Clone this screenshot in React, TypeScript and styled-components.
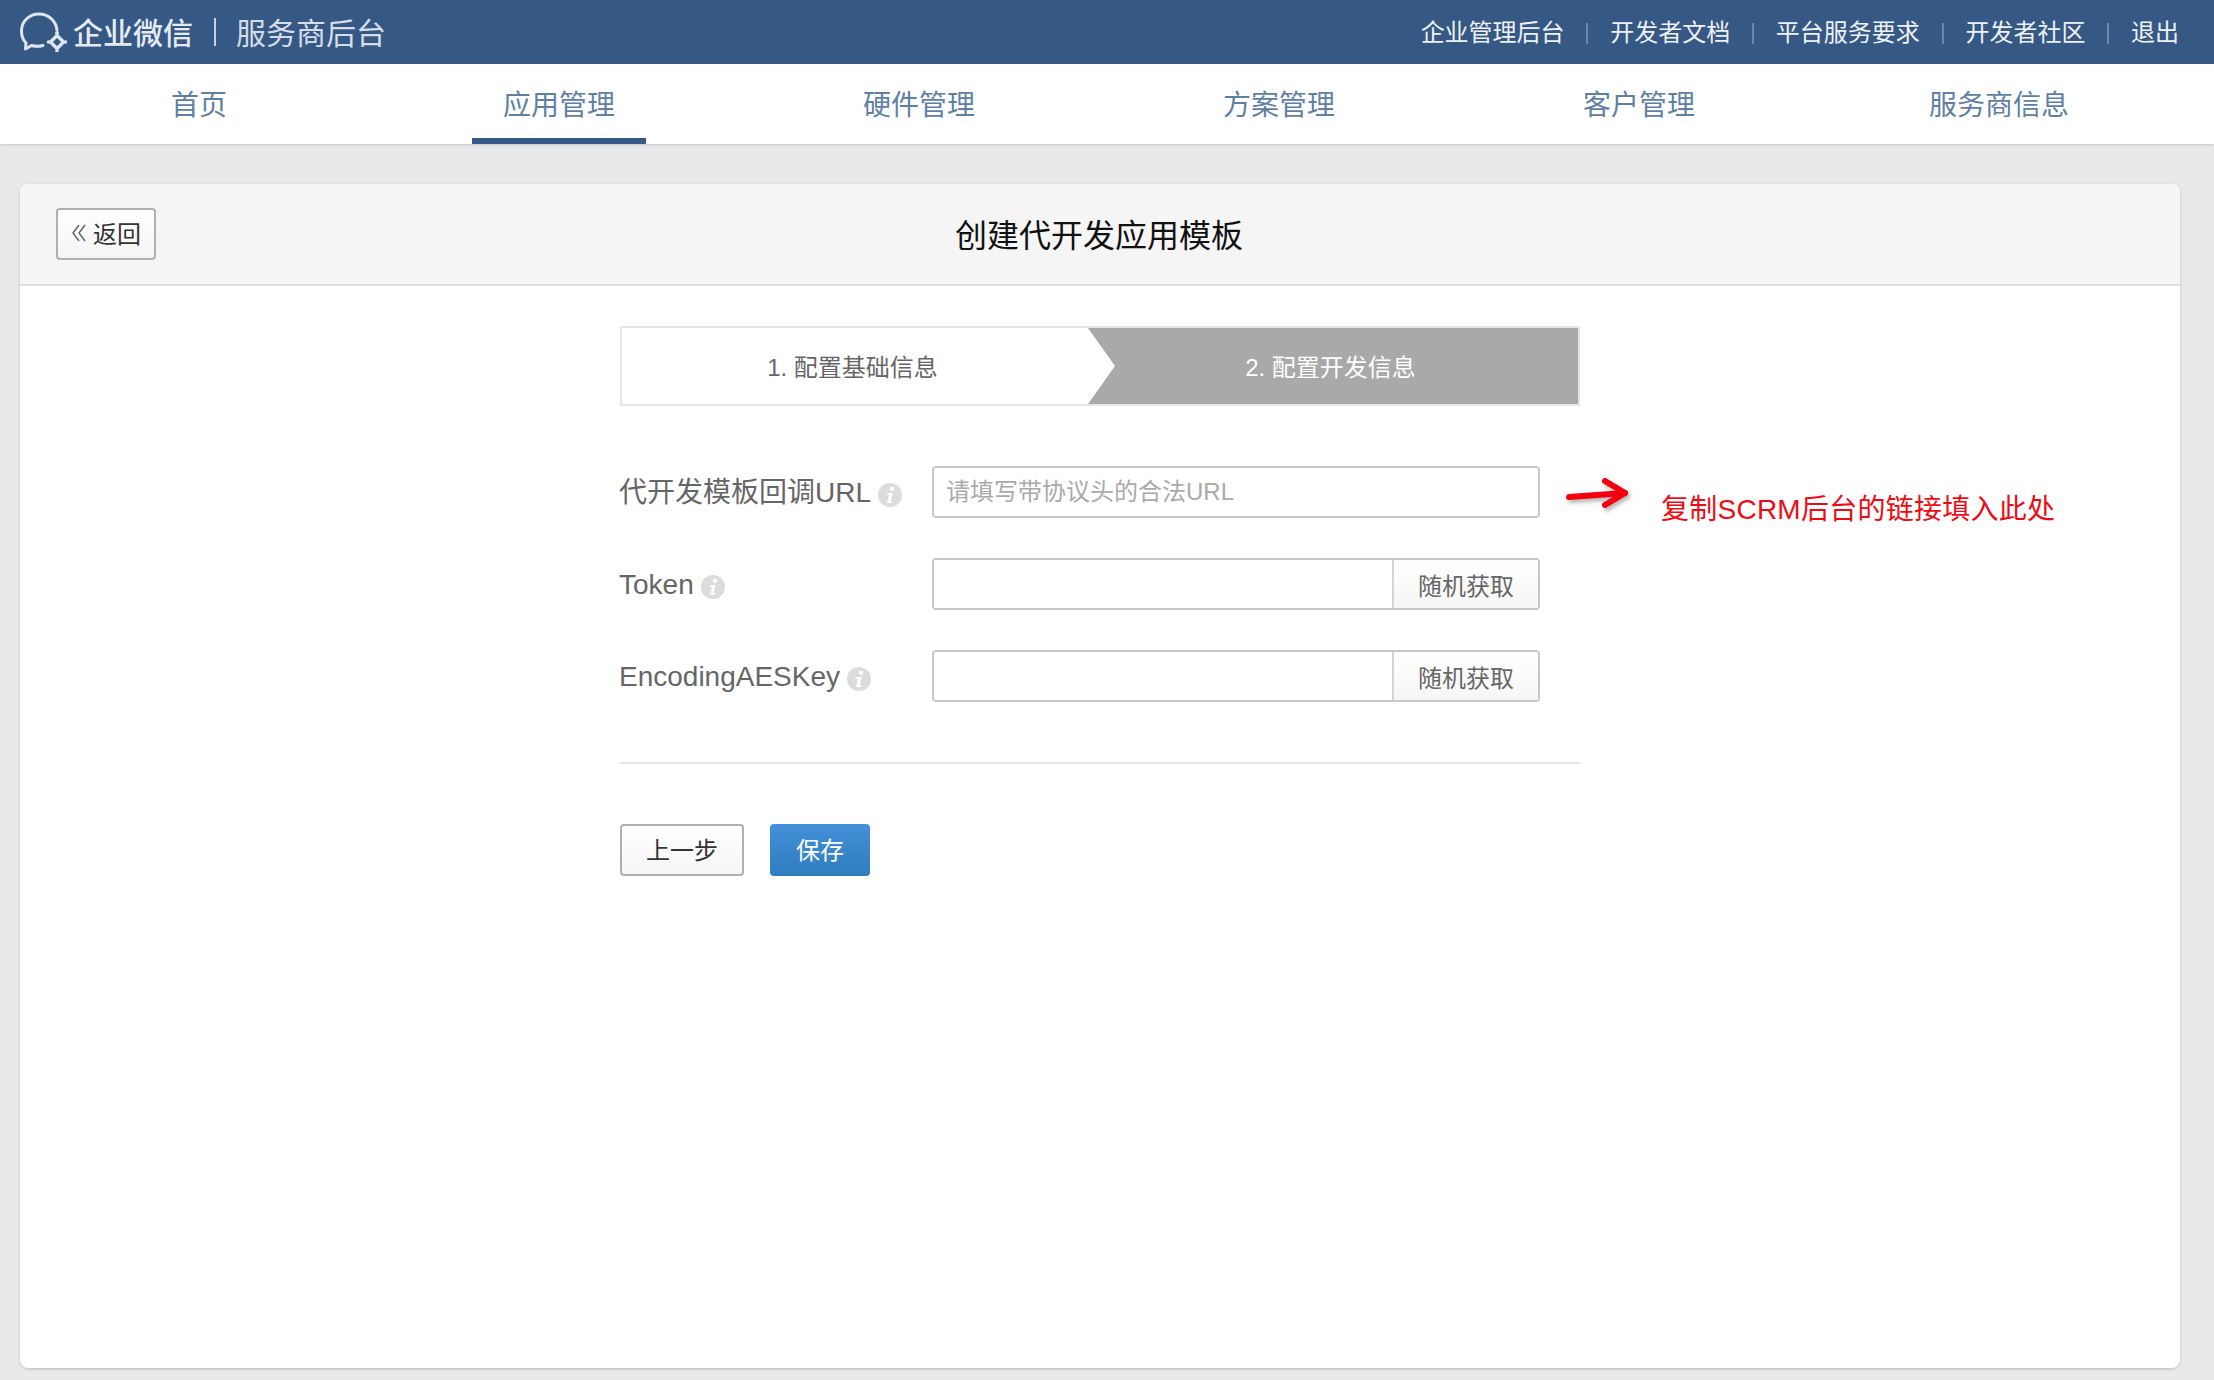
import styled, { createGlobalStyle } from 'styled-components';

const FONT = '"Liberation Sans", "Noto Sans CJK SC", sans-serif';

const GlobalStyle = createGlobalStyle`
  * { box-sizing: border-box; }
  html, body { margin: 0; padding: 0; }
  body {
    min-height: 1380px;
    background: #e8e9eb;
    font-family: ${FONT};
    overflow: hidden;
  }
`;

const TopBar = styled.header`
  height: 64px;
  background: #355885;
  display: flex;
  align-items: center;
  justify-content: space-between;
  padding: 0 35px 0 20px;
`;

const Brand = styled.div`
  display: flex;
  align-items: center;
  color: #dfe5ee;
`;

const BrandName = styled.span`
  font-size: 30px;
  margin-left: 6px;
  padding-bottom: 2px;
  color: #e6ebf2;
  font-weight: 500;
`;

const BrandDivider = styled.i`
  width: 2px;
  height: 28px;
  margin: 0 20px 0 21px;
  background: #c5d0df;
`;

const BrandSub = styled.span`
  font-size: 30px;
  padding-bottom: 2px;
  color: #d5dde8;
`;

const TopLinks = styled.nav`
  display: flex;
  align-items: center;
  padding-bottom: 4px;
`;

const TopLink = styled.a`
  font-size: 24px;
  color: #eef1f6;
  & + &::before {
    content: '';
    display: inline-block;
    width: 2px;
    height: 21px;
    margin: 0 21.8px;
    vertical-align: -3px;
    background: #6d88ab;
  }
`;

const NavBar = styled.nav`
  height: 80px;
  background: #fff;
  display: grid;
  grid-template-columns: repeat(6, 360px);
  padding-left: 19px;
  box-shadow: 0 1px 3px rgba(0, 0, 0, 0.14);
  position: relative;
`;

const NavCell = styled.div`
  display: flex;
  justify-content: center;
`;

const NavTab = styled.a<{ $active?: boolean }>`
  display: flex;
  align-items: center;
  padding: 0 31px 3px;
  font-size: 28px;
  color: #5f7fa5;
  box-shadow: ${p => (p.$active ? 'inset 0 -6px 0 #355885' : 'none')};
`;

const Card = styled.main`
  margin: 40px 34px 0 20px;
  height: 1184px;
  background: #fff;
  border-radius: 8px;
  box-shadow: 0 1px 3px rgba(0, 0, 0, 0.2);
`;

const CardHead = styled.div`
  height: 102px;
  position: relative;
  display: flex;
  align-items: center;
  justify-content: center;
  background: #f5f5f5;
  border-bottom: 2px solid #dfe1e4;
  border-radius: 8px 8px 0 0;
`;

const BackButton = styled.button`
  position: absolute;
  left: 36px;
  top: 24px;
  width: 100px;
  height: 52px;
  display: flex;
  align-items: center;
  justify-content: center;
  gap: 6px;
  padding: 0 0 3px;
  font-family: ${FONT};
  font-size: 24px;
  color: #333;
  background: linear-gradient(#fff, #f5f5f5);
  border: 2px solid #b0b0b0;
  border-radius: 4px;
`;

const Title = styled.h1`
  margin: 0 2px 3px 0;
  font-size: 32px;
  font-weight: 400;
  color: #111;
`;

const Form = styled.div`
  width: 960px;
  margin: 40px auto 0;
`;

const Steps = styled.div`
  height: 80px;
  display: flex;
  border: 2px solid #e6e6e6;
  margin-bottom: 60px;
`;

const StepFirst = styled.div`
  flex: 0 0 466px;
  padding: 0 5px 2px 0;
  display: flex;
  align-items: center;
  justify-content: center;
  font-size: 24px;
  color: #666;
`;

const StepSecond = styled.div`
  flex: 1;
  padding: 0 5px 2px 0;
  display: flex;
  align-items: center;
  justify-content: center;
  font-size: 24px;
  color: #fff;
  background: #a9a9a9;
  clip-path: polygon(0 0, 100% 0, 100% 100%, 0 100%, 27px 50%);
`;

const Row = styled.div`
  position: relative;
  display: flex;
  align-items: center;
  height: 52px;
  margin-bottom: 40px;
`;

const Label = styled.label`
  flex: 0 0 313px;
  display: flex;
  align-items: center;
  gap: 7px;
  margin-left: -1px;
  padding-top: 2px;
  font-size: 28px;
  line-height: 40px;
  color: #666;
`;

const InfoIcon = styled.svg`
  margin-top: 3px;
`;

const Field = styled.div`
  width: 608px;
  height: 52px;
  display: flex;
  background: #fff;
  border: 2px solid #c8c8c8;
  border-radius: 4px;
  overflow: hidden;
`;

const Input = styled.input`
  flex: 1;
  min-width: 0;
  padding: 0 12px;
  border: 0;
  outline: 0;
  font-family: ${FONT};
  font-size: 24px;
  color: #333;
  &::placeholder { color: #aaa; }
`;

const FieldButton = styled.button`
  width: 146px;
  padding: 0;
  border: 0;
  border-left: 2px solid #d4d4d4;
  background: linear-gradient(#fff, #f6f6f6);
  font-family: ${FONT};
  font-size: 24px;
  color: #666;
`;

const Annotation = styled.div`
  position: absolute;
  left: 945px;
  top: 9px;
  display: flex;
  align-items: flex-start;
  white-space: nowrap;
`;

const AnnotationText = styled.span`
  margin: 12px 0 0 30px;
  font-size: 28px;
  letter-spacing: 0.25px;
  color: #f00a14;
`;

const Divider = styled.hr`
  height: 2px;
  margin: 60px 0;
  border: 0;
  background: #e6e6e6;
`;

const Actions = styled.div`
  display: flex;
  gap: 26px;
`;

const ActionButton = styled.button<{ $primary?: boolean }>`
  width: ${p => (p.$primary ? 100 : 124)}px;
  height: 52px;
  padding: 0 0 4px;
  font-family: ${FONT};
  font-size: 24px;
  border-radius: 4px;
  color: ${p => (p.$primary ? '#fff' : '#333')};
  border: ${p => (p.$primary ? '0' : '2px solid #b0b0b0')};
  background: ${p =>
    p.$primary ? 'linear-gradient(#4390da, #2f7dbd)' : 'linear-gradient(#fff, #f6f6f6)'};
`;

const Logo = () => (
  <svg width="47" height="40" viewBox="0 0 47 40" fill="none">
    <path
      d="M6 31 C2.500 27.500 1.500 23 1.500 19 C1.500 9 9.500 2 19 2 C28.500 2 36 9 37 18 M23 33.500 C19.500 34.500 15 34.500 11.500 33.500 L5.500 37 L6 31"
      stroke="#dfe5ee"
      strokeWidth="3"
      strokeLinecap="round"
      strokeLinejoin="round"
    />
    <path d="M37 23.500 L43.500 30 L37 36.500 L30.500 30 Z" stroke="#dfe5ee" strokeWidth="3.500" strokeLinejoin="round" />
    <circle cx="37" cy="21" r="2" fill="#dfe5ee" />
    <circle cx="45.500" cy="30" r="1.800" fill="#dfe5ee" />
    <circle cx="28.500" cy="30" r="1.800" fill="#dfe5ee" />
    <circle cx="37" cy="39" r="1.800" fill="#dfe5ee" />
  </svg>
);

const Chevrons = () => (
  <svg width="16" height="20" viewBox="0 0 16 20" fill="none" stroke="#666" strokeWidth="1.500">
    <path d="M8 2 L2 10 L8 18" />
    <path d="M14 2 L8 10 L14 18" />
  </svg>
);

const Info = () => (
  <InfoIcon width="24" height="24" viewBox="0 0 24 24">
    <circle cx="12" cy="12" r="12" fill="#dcdcdc" />
    <circle cx="14" cy="5.800" r="2.200" fill="#fff" />
    <path d="M9.500 10 H14.800 L12.600 18 H14.500 L14 20 H9 L11 12 H9 Z" fill="#fff" />
  </InfoIcon>
);

const RedArrow = () => (
  <svg
    width="66"
    height="36"
    viewBox="0 0 66 36"
    fill="none"
    stroke="#f5000f"
    strokeWidth="6"
    strokeLinecap="round"
    strokeLinejoin="round"
    style={{ filter: 'drop-shadow(2px 3px 2px rgba(0,0,0,0.3))' }}
  >
    <path d="M4 22 L60 18" />
    <path d="M40 6 L60 18 L40 30" />
  </svg>
);

const App = () => (
  <>
    <GlobalStyle />
    <TopBar>
      <Brand>
        <Logo />
        <BrandName>企业微信</BrandName>
        <BrandDivider />
        <BrandSub>服务商后台</BrandSub>
      </Brand>
      <TopLinks>
        <TopLink>企业管理后台</TopLink>
        <TopLink>开发者文档</TopLink>
        <TopLink>平台服务要求</TopLink>
        <TopLink>开发者社区</TopLink>
        <TopLink>退出</TopLink>
      </TopLinks>
    </TopBar>
    <NavBar>
      {['首页', '应用管理', '硬件管理', '方案管理', '客户管理', '服务商信息'].map((name, i) => (
        <NavCell key={name}>
          <NavTab $active={i === 1}>{name}</NavTab>
        </NavCell>
      ))}
    </NavBar>
    <Card>
      <CardHead>
        <BackButton>
          <Chevrons />
          返回
        </BackButton>
        <Title>创建代开发应用模板</Title>
      </CardHead>
      <Form>
        <Steps>
          <StepFirst>1. 配置基础信息</StepFirst>
          <StepSecond>2. 配置开发信息</StepSecond>
        </Steps>
        <Row>
          <Label>
            代开发模板回调URL
            <Info />
          </Label>
          <Field>
            <Input placeholder="请填写带协议头的合法URL" />
          </Field>
          <Annotation>
            <RedArrow />
            <AnnotationText>复制SCRM后台的链接填入此处</AnnotationText>
          </Annotation>
        </Row>
        <Row>
          <Label>
            Token
            <Info />
          </Label>
          <Field>
            <Input />
            <FieldButton>随机获取</FieldButton>
          </Field>
        </Row>
        <Row>
          <Label>
            EncodingAESKey
            <Info />
          </Label>
          <Field>
            <Input />
            <FieldButton>随机获取</FieldButton>
          </Field>
        </Row>
        <Divider />
        <Actions>
          <ActionButton>上一步</ActionButton>
          <ActionButton $primary>保存</ActionButton>
        </Actions>
      </Form>
    </Card>
  </>
);

export default App;
